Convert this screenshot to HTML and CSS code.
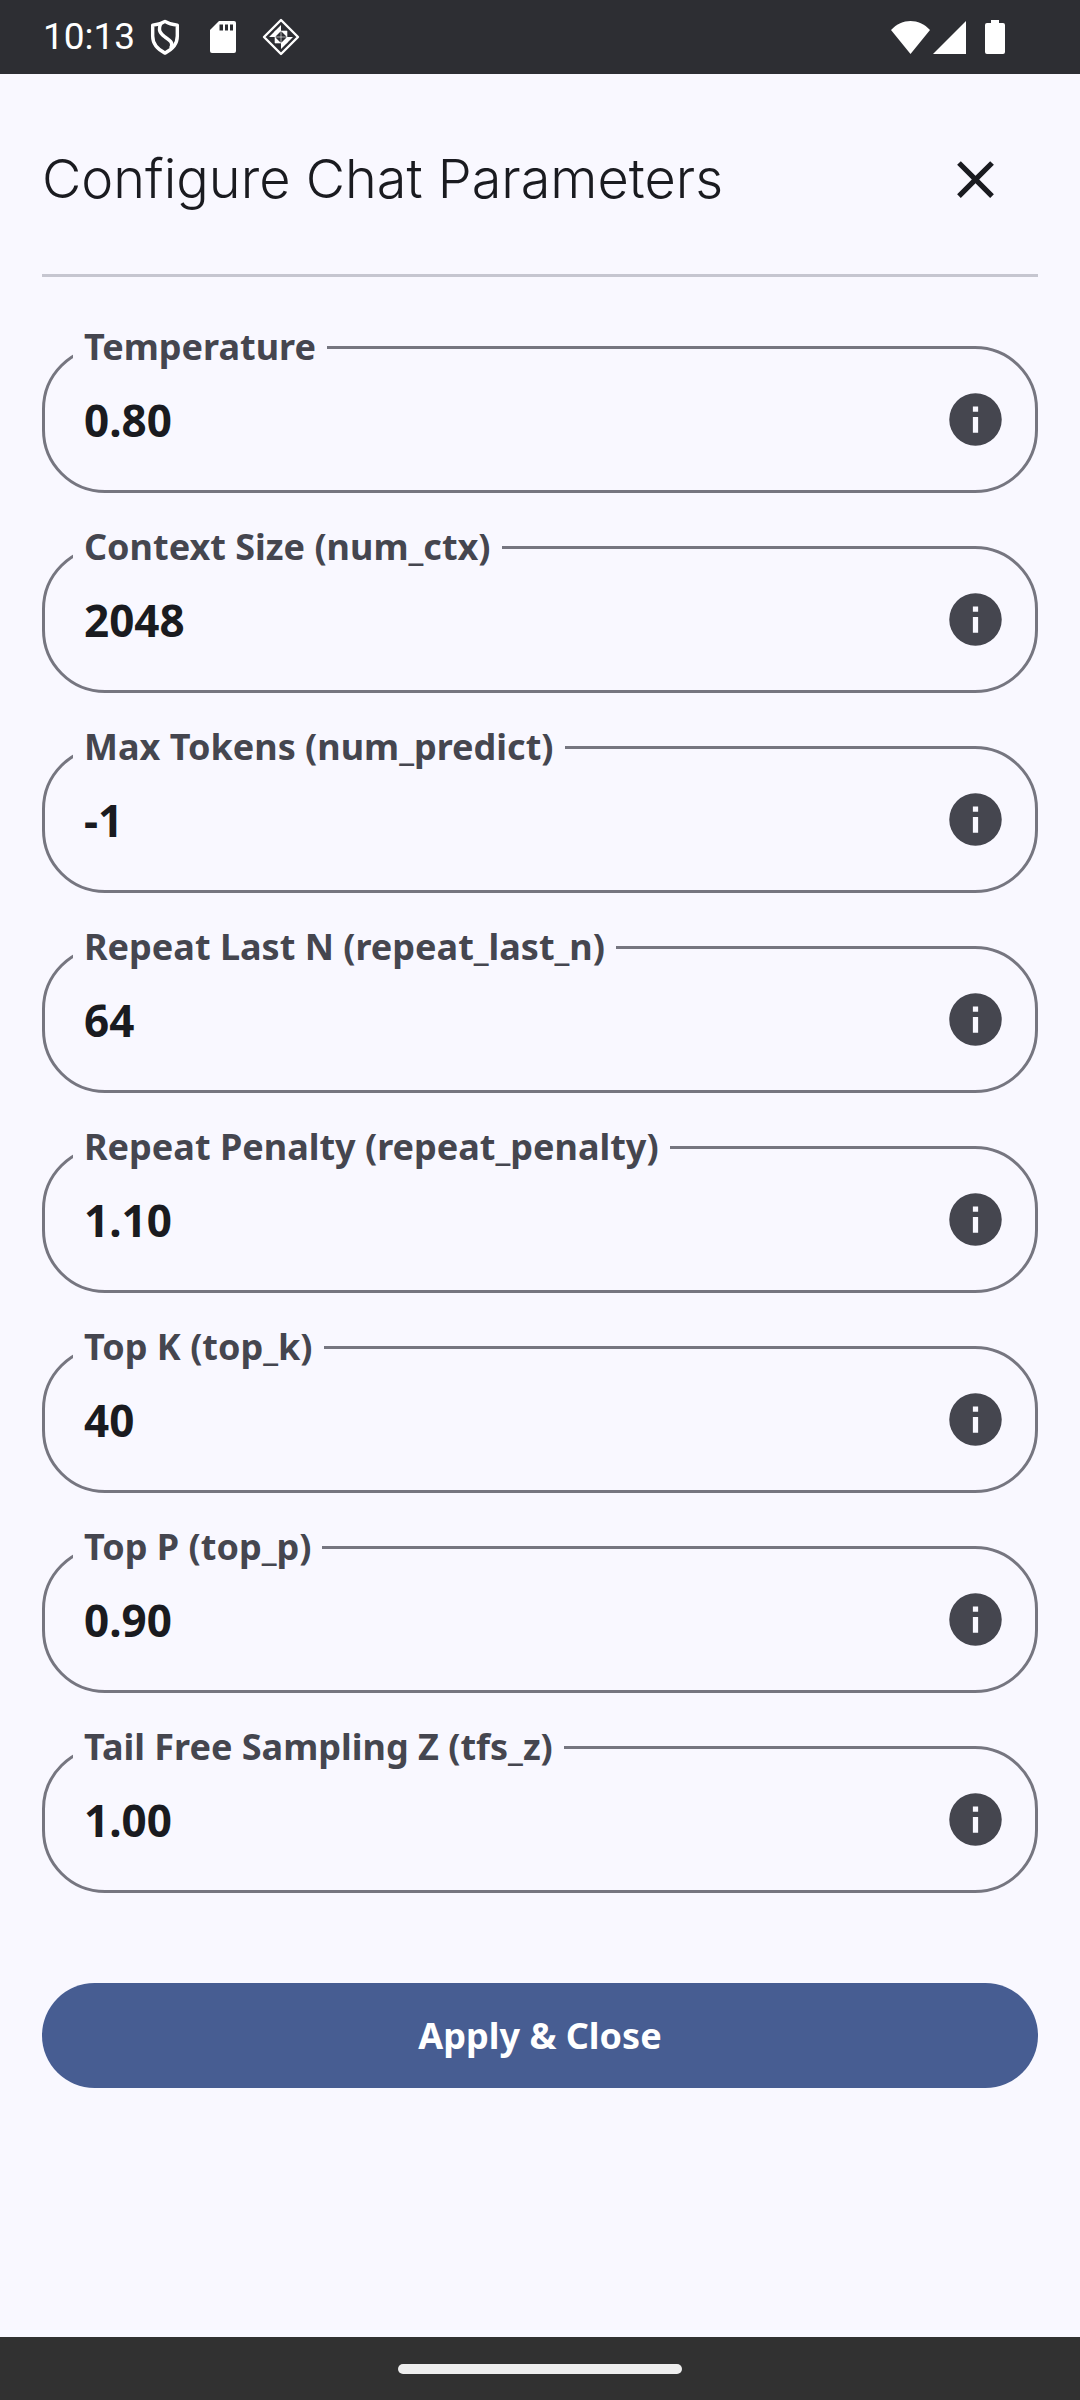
FILE: index.html
```html
<!DOCTYPE html>
<html lang="en">
<head>
<meta charset="utf-8">
<meta name="viewport" content="width=device-width, initial-scale=1">
<title>Configure Chat Parameters</title>
<link rel="stylesheet" href="styles.css">
</head>
<body>
<svg class="sprite" aria-hidden="true">
  <symbol id="info" viewBox="0 0 24 24"><path fill="currentColor" d="M12 2a10 10 0 1 0 0 20 10 10 0 0 0 0-20zm1 15h-2v-6h2zm0-8h-2V7h2z"/></symbol>
</svg>
<div class="status">
  <div class="status-left">
    <span class="clock">10:13</span>
    <svg class="shield" viewBox="0 0 32 38" fill="none" stroke="#fff" stroke-width="3.6" stroke-linejoin="round"><path d="M16 2.5C12 5 8 6 3 6.500V18c0 8 5 14 13 18 8-4 13-10 13-18V6.500C24 6 20 5 16 2.500z"/><path d="M12 4c-4 8-1 11 4 15 6 4 9 6 6 12"/></svg>
    <svg class="sdcard" viewBox="0 0 26 32"><path fill="#fff" d="M9 0h15a2 2 0 0 1 2 2v28a2 2 0 0 1-2 2H2a2 2 0 0 1-2-2V9z"/><path fill="#2d2e33" d="M9.500 3.500H13v6H9.500zM15 3.500h3v6h-3zM20 3.500h3v6h-3z"/></svg>
    <svg class="diamond" viewBox="-19 -19 38 38"><path fill="none" stroke="#fff" stroke-width="2.400" stroke-linejoin="round" d="M0-17L17 0 0 17-17 0z"/><path fill="none" stroke="#fff" stroke-opacity=".6" d="M-6-6H6V6H-6zM0-6V6M-6 0H6"/><path fill="#fff" d="M0-12v6h-6zM12 0H6v6zM0 12V6h6zM-12 0h6v-6zM0-6h6v6zM6 0v6H0zM0 6h-6V0zM-6 0v-6h6z"/></svg>
  </div>
  <div class="status-right">
    <svg class="wifi" viewBox="0 0 39 33"><path fill="#fff" d="M0 9C11-3 28-3 39 9L19.500 33z"/></svg>
    <svg class="signal" viewBox="0 0 33 33"><path fill="#fff" d="M33 0v33H0z"/></svg>
    <svg class="battery" viewBox="0 0 20 34"><path fill="#fff" d="M6 0h8v3h4a2 2 0 0 1 2 2v27a2 2 0 0 1-2 2H2a2 2 0 0 1-2-2V5a2 2 0 0 1 2-2h4z"/></svg>
  </div>
</div>
<main class="screen">
  <header class="header">
    <h1 class="title">Configure Chat Parameters</h1>
    <button class="icon-button" type="button" aria-label="Close"><svg class="close" viewBox="0 0 24 24"><path fill="currentColor" d="M19 6.410 17.590 5 12 10.590 6.410 5 5 6.410 10.590 12 5 17.590 6.410 19 12 13.410 17.590 19 19 17.590 13.410 12z"/></svg></button>
  </header>
  <form class="form">
    <div class="field"><label class="label" for="temperature">Temperature</label><input class="input" id="temperature" value="0.80"><button class="icon-button" type="button" aria-label="About temperature"><svg class="info"><use href="#info"/></svg></button></div>
    <div class="field"><label class="label" for="num_ctx">Context Size (num_ctx)</label><input class="input" id="num_ctx" value="2048"><button class="icon-button" type="button" aria-label="About context size"><svg class="info"><use href="#info"/></svg></button></div>
    <div class="field"><label class="label" for="num_predict">Max Tokens (num_predict)</label><input class="input" id="num_predict" value="-1"><button class="icon-button" type="button" aria-label="About max tokens"><svg class="info"><use href="#info"/></svg></button></div>
    <div class="field"><label class="label" for="repeat_last_n">Repeat Last N (repeat_last_n)</label><input class="input" id="repeat_last_n" value="64"><button class="icon-button" type="button" aria-label="About repeat last N"><svg class="info"><use href="#info"/></svg></button></div>
    <div class="field"><label class="label" for="repeat_penalty">Repeat Penalty (repeat_penalty)</label><input class="input" id="repeat_penalty" value="1.10"><button class="icon-button" type="button" aria-label="About repeat penalty"><svg class="info"><use href="#info"/></svg></button></div>
    <div class="field"><label class="label" for="top_k">Top K (top_k)</label><input class="input" id="top_k" value="40"><button class="icon-button" type="button" aria-label="About top K"><svg class="info"><use href="#info"/></svg></button></div>
    <div class="field"><label class="label" for="top_p">Top P (top_p)</label><input class="input" id="top_p" value="0.90"><button class="icon-button" type="button" aria-label="About top P"><svg class="info"><use href="#info"/></svg></button></div>
    <div class="field"><label class="label" for="tfs_z">Tail Free Sampling Z (tfs_z)</label><input class="input" id="tfs_z" value="1.00"><button class="icon-button" type="button" aria-label="About tail free sampling"><svg class="info"><use href="#info"/></svg></button></div>
    <button class="apply" type="button">Apply &amp; Close</button>
  </form>
</main>
<div class="navbar"><div class="handle"></div></div>
</body>
</html>
```
FILE: styles.css
```css
* { box-sizing: border-box; }
body {
  margin: 0;
  min-height: 100vh;
  display: flex;
  flex-direction: column;
  background: #f9f8ff;
  color: #1a1b20;
  font-family: "Noto Sans", sans-serif;
}
button, input { font: inherit; color: inherit; border: 0; background: none; padding: 0; margin: 0; }
svg { display: block; flex: none; }
.sprite { position: absolute; width: 0; height: 0; }

.status {
  display: flex;
  justify-content: space-between;
  align-items: center;
  height: 74px;
  padding: 0 75px 0 43px;
  background: #2d2e33;
  color: #fff;
}
.status-left, .status-right { display: flex; align-items: center; }
.clock { font: 37px/44px Roboto, sans-serif; }
.shield { width: 32px; height: 36px; margin-left: 14px; }
.sdcard { width: 26px; height: 32px; margin-left: 29px; }
.diamond { width: 38px; height: 38px; margin-left: 26px; }
.wifi { width: 39px; height: 33px; }
.signal { width: 33px; height: 33px; margin-left: 3px; }
.battery { width: 20px; height: 34px; margin-left: 19px; }

.screen { flex: 1; padding: 0 42px; }
.header {
  display: flex;
  justify-content: space-between;
  align-items: center;
  height: 203px;
  padding: 10px 0 0;
  border-bottom: 3px solid #c6c6d0;
}
.title { margin: 0; font: 300 54px/72px Inter, sans-serif; white-space: nowrap; }
.icon-button { display: flex; align-items: center; justify-content: center; width: 126px; height: 126px; flex: none; }
.close, .info { width: 63px; height: 63px; }
.info { color: #45464f; }

.form { display: flex; flex-direction: column; gap: 53px; padding-top: 69px; }
.field {
  position: relative;
  display: flex;
  align-items: center;
  height: 147px;
  padding-left: 39px;
  border: 3px solid #767680;
  border-radius: 63px;
}
.label {
  position: absolute;
  left: 28px;
  top: -24px;
  padding: 0 11px;
  background: #f9f8ff;
  color: #45464f;
  font-size: 36px;
  line-height: 44px;
  font-weight: 700;
  white-space: nowrap;
}
.input { flex: 1; min-width: 0; height: 84px; font-size: 44px; font-weight: 700; outline: 0; }
.field .icon-button { margin-right: -3px; }
.apply {
  height: 105px;
  margin-top: 37px;
  border-radius: 53px;
  background: #475d92;
  color: #fff;
  font-size: 36px;
  font-weight: 700;
}
.navbar { display: flex; align-items: center; justify-content: center; height: 63px; background: #313131; }
.handle { width: 284px; height: 10px; border-radius: 5px; background: #eee; }
```
